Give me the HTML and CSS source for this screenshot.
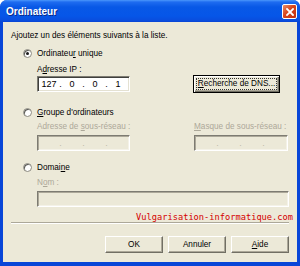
FILE: index.html
```html
<!DOCTYPE html>
<html lang="fr">
<head>
  <meta charset="UTF-8" />
  <title>Ordinateur</title>
  <link rel="stylesheet" href="styles.css">
</head>
<body>
  <div class="window">
    <div class="titlebar">
      <span class="title">Ordinateur</span>
      <span class="close-btn">
        <svg width="8" height="8" viewBox="0 0 8 8"><path d="M1 1 L7 7 M7 1 L1 7" stroke="#fff" stroke-width="1.8" stroke-linecap="square"/></svg>
      </span>
    </div>

    <div class="client">
      <p class="intro">Ajoutez un des éléments suivants à la liste.</p>

      <div class="radio-row"><span class="radio checked"></span><span>Ordinateu<u>r</u> unique</span></div>
      <div class="field-label">A<u>d</u>resse IP :</div>
      <div class="ip-row">
        <div class="ip-box">
          <span class="seg">127</span><span class="dot">.</span>
          <span class="seg">0</span><span class="dot">.</span>
          <span class="seg">0</span><span class="dot">.</span>
          <span class="seg">1</span>
        </div>
        <div class="btn btn-default"><span class="focus-rect"><u>R</u>echerche de DNS...</span></div>
      </div>

      <div class="radio-row group-row"><span class="radio"></span><span><u>G</u>roupe d'ordinateurs</span></div>
      <div class="subnet-grid">
        <div class="field-label disabled">Adresse de <u>s</u>ous-réseau :</div>
        <div class="field-label disabled"><u>M</u>asque de sous-réseau :</div>
        <div class="ip-box off">
          <span class="seg"></span><span class="dot">.</span>
          <span class="seg"></span><span class="dot">.</span>
          <span class="seg"></span><span class="dot">.</span>
          <span class="seg"></span>
        </div>
        <div class="ip-box off wide">
          <span class="seg"></span><span class="dot">.</span>
          <span class="seg"></span><span class="dot">.</span>
          <span class="seg"></span><span class="dot">.</span>
          <span class="seg"></span>
        </div>
      </div>

      <div class="radio-row domain-row"><span class="radio"></span><span>Domai<u>n</u>e</span></div>
      <div class="field-label disabled name-label">N<u>o</u>m :</div>
      <div class="text-box off"></div>

      <div class="watermark">Vulgarisation-informatique.com</div>
      <div class="separator"></div>

      <div class="buttons">
        <div class="btn">OK</div>
        <div class="btn">Annuler</div>
        <div class="btn"><span><u>A</u>ide</span></div>
      </div>
    </div>
  </div>
</body>
</html>
```

FILE: styles.css
```css
* {
  margin: 0;
  padding: 0;
  box-sizing: border-box;
}

body {
  background: #fff;
  font-family: 'Liberation Sans', Arial, sans-serif;
  font-size: 8.2px;
  color: #000;
}

u {
  text-decoration: underline;
  text-underline-offset: 1px;
}

.window {
  width: 300px;
  height: 266px;
  background: #0846d8;
  border-radius: 7px 7px 0 0;
  display: flex;
  flex-direction: column;
}

.titlebar {
  height: 22px;
  flex-shrink: 0;
  display: flex;
  align-items: center;
  justify-content: space-between;
  padding: 0 3px 0 6px;
  border-radius: 7px 7px 0 0;
  background: linear-gradient(#4b97fb 0, #1f6cf0 2px, #0858e6 7px, #0656e8 16px, #0a4cdc 21px, #0842d2 22px);
}

.title {
  color: #fff;
  font-weight: bold;
  font-size: 10px;
  text-shadow: 1px 1px 0 #0a2a88;
  margin-top: 1px;
}

.close-btn {
  width: 15px;
  height: 15px;
  margin-top: 1px;
  background: linear-gradient(135deg, #e88e6a, #d8451c 45%, #c0300c);
  border: 1px solid #fff;
  border-radius: 2px;
  display: flex;
  align-items: center;
  justify-content: center;
}

.client {
  flex: 1;
  margin: 0 3px 4px;
  background: #ece9d8;
  padding: 8px 8px 0;
  display: flex;
  flex-direction: column;
  white-space: nowrap;
}

.intro {
  line-height: 12px;
}

.radio-row {
  display: flex;
  align-items: center;
  height: 12px;
  margin-top: 5px;
  margin-left: 12px;
}

.group-row {
  margin-top: 13px;
}

.domain-row {
  margin-top: 10px;
}

.radio {
  width: 9px;
  height: 9px;
  border-radius: 50%;
  background: #fff;
  border: 1px solid #8c8a80;
  box-shadow: inset 1px 1px 0 #5a5a56;
  margin-right: 5px;
  display: flex;
  align-items: center;
  justify-content: center;
}

.radio.checked::after {
  content: "";
  width: 3px;
  height: 3px;
  border-radius: 50%;
  background: #1a1a1a;
}

.field-label {
  line-height: 12px;
  margin-top: 5px;
  margin-left: 26px;
}

.disabled {
  color: #aca899;
}

.ip-row {
  display: flex;
  align-items: center;
  height: 18px;
  margin-top: -1px;
  margin-left: 26px;
  gap: 63px;
}

.ip-box {
  width: 93px;
  height: 16px;
  background: #fff;
  border-top: 1px solid #7d7b72;
  border-left: 1px solid #7d7b72;
  border-right: 1px solid #fff;
  border-bottom: 1px solid #fff;
  box-shadow: inset 1px 1px 0 #3f3f3c, inset -1px -1px 0 #e4e1d2;
  display: flex;
  align-items: center;
  padding-left: 1px;
  font-size: 9px;
}

.ip-box .seg {
  width: 20px;
  text-align: center;
}

.ip-box .dot {
  width: 3px;
  text-align: center;
}

.ip-box.off {
  background: #ece9d8;
  box-shadow: inset 1px 1px 0 #aca899, inset -1px -1px 0 #f4f2e8;
  color: #bdb9a8;
}

.ip-box.wide {
  width: 94px;
}

.subnet-grid {
  display: grid;
  grid-template-columns: 157px 94px;
  margin-left: 26px;
  row-gap: 2px;
}

.subnet-grid .field-label {
  margin: 3px 0 0;
}

.name-label {
  margin-top: 4px;
}

.text-box {
  width: 252px;
  height: 16px;
  flex-shrink: 0;
  margin: 2px 0 0 26px;
  border-top: 1px solid #7d7b72;
  border-left: 1px solid #7d7b72;
  border-right: 1px solid #fff;
  border-bottom: 1px solid #fff;
  box-shadow: inset 1px 1px 0 #aca899, inset -1px -1px 0 #f4f2e8;
}

.watermark {
  margin-top: 6px;
  align-self: flex-end;
  color: #d50000;
  font-family: 'DejaVu Sans Mono', 'Liberation Mono', monospace;
  font-size: 8.7px;
  line-height: 9px;
  margin-right: -4px;
}

.separator {
  height: 2px;
  flex-shrink: 0;
  border-top: 1px solid #aca899;
  border-bottom: 1px solid #fff;
}

.btn {
  height: 17px;
  flex-shrink: 0;
  display: flex;
  align-items: center;
  justify-content: center;
  background: #ece9d8;
  border-top: 1px solid #fff;
  border-left: 1px solid #fff;
  border-right: 1px solid #716f64;
  border-bottom: 1px solid #716f64;
  box-shadow: inset -1px -1px 0 #aca899;
}

.btn-default {
  width: 87px;
  height: 18px;
  border: 1px solid #000;
  box-shadow: inset 1px 1px 0 #fff, inset -1px -1px 0 #716f64, inset -2px -2px 0 #aca899;
}

.focus-rect {
  border: 1px dotted #333;
  padding: 0 1px;
  line-height: 10px;
}

.buttons {
  display: flex;
  justify-content: flex-end;
  gap: 5px;
  margin-top: 12px;
}

.buttons .btn {
  width: 58px;
}
```
